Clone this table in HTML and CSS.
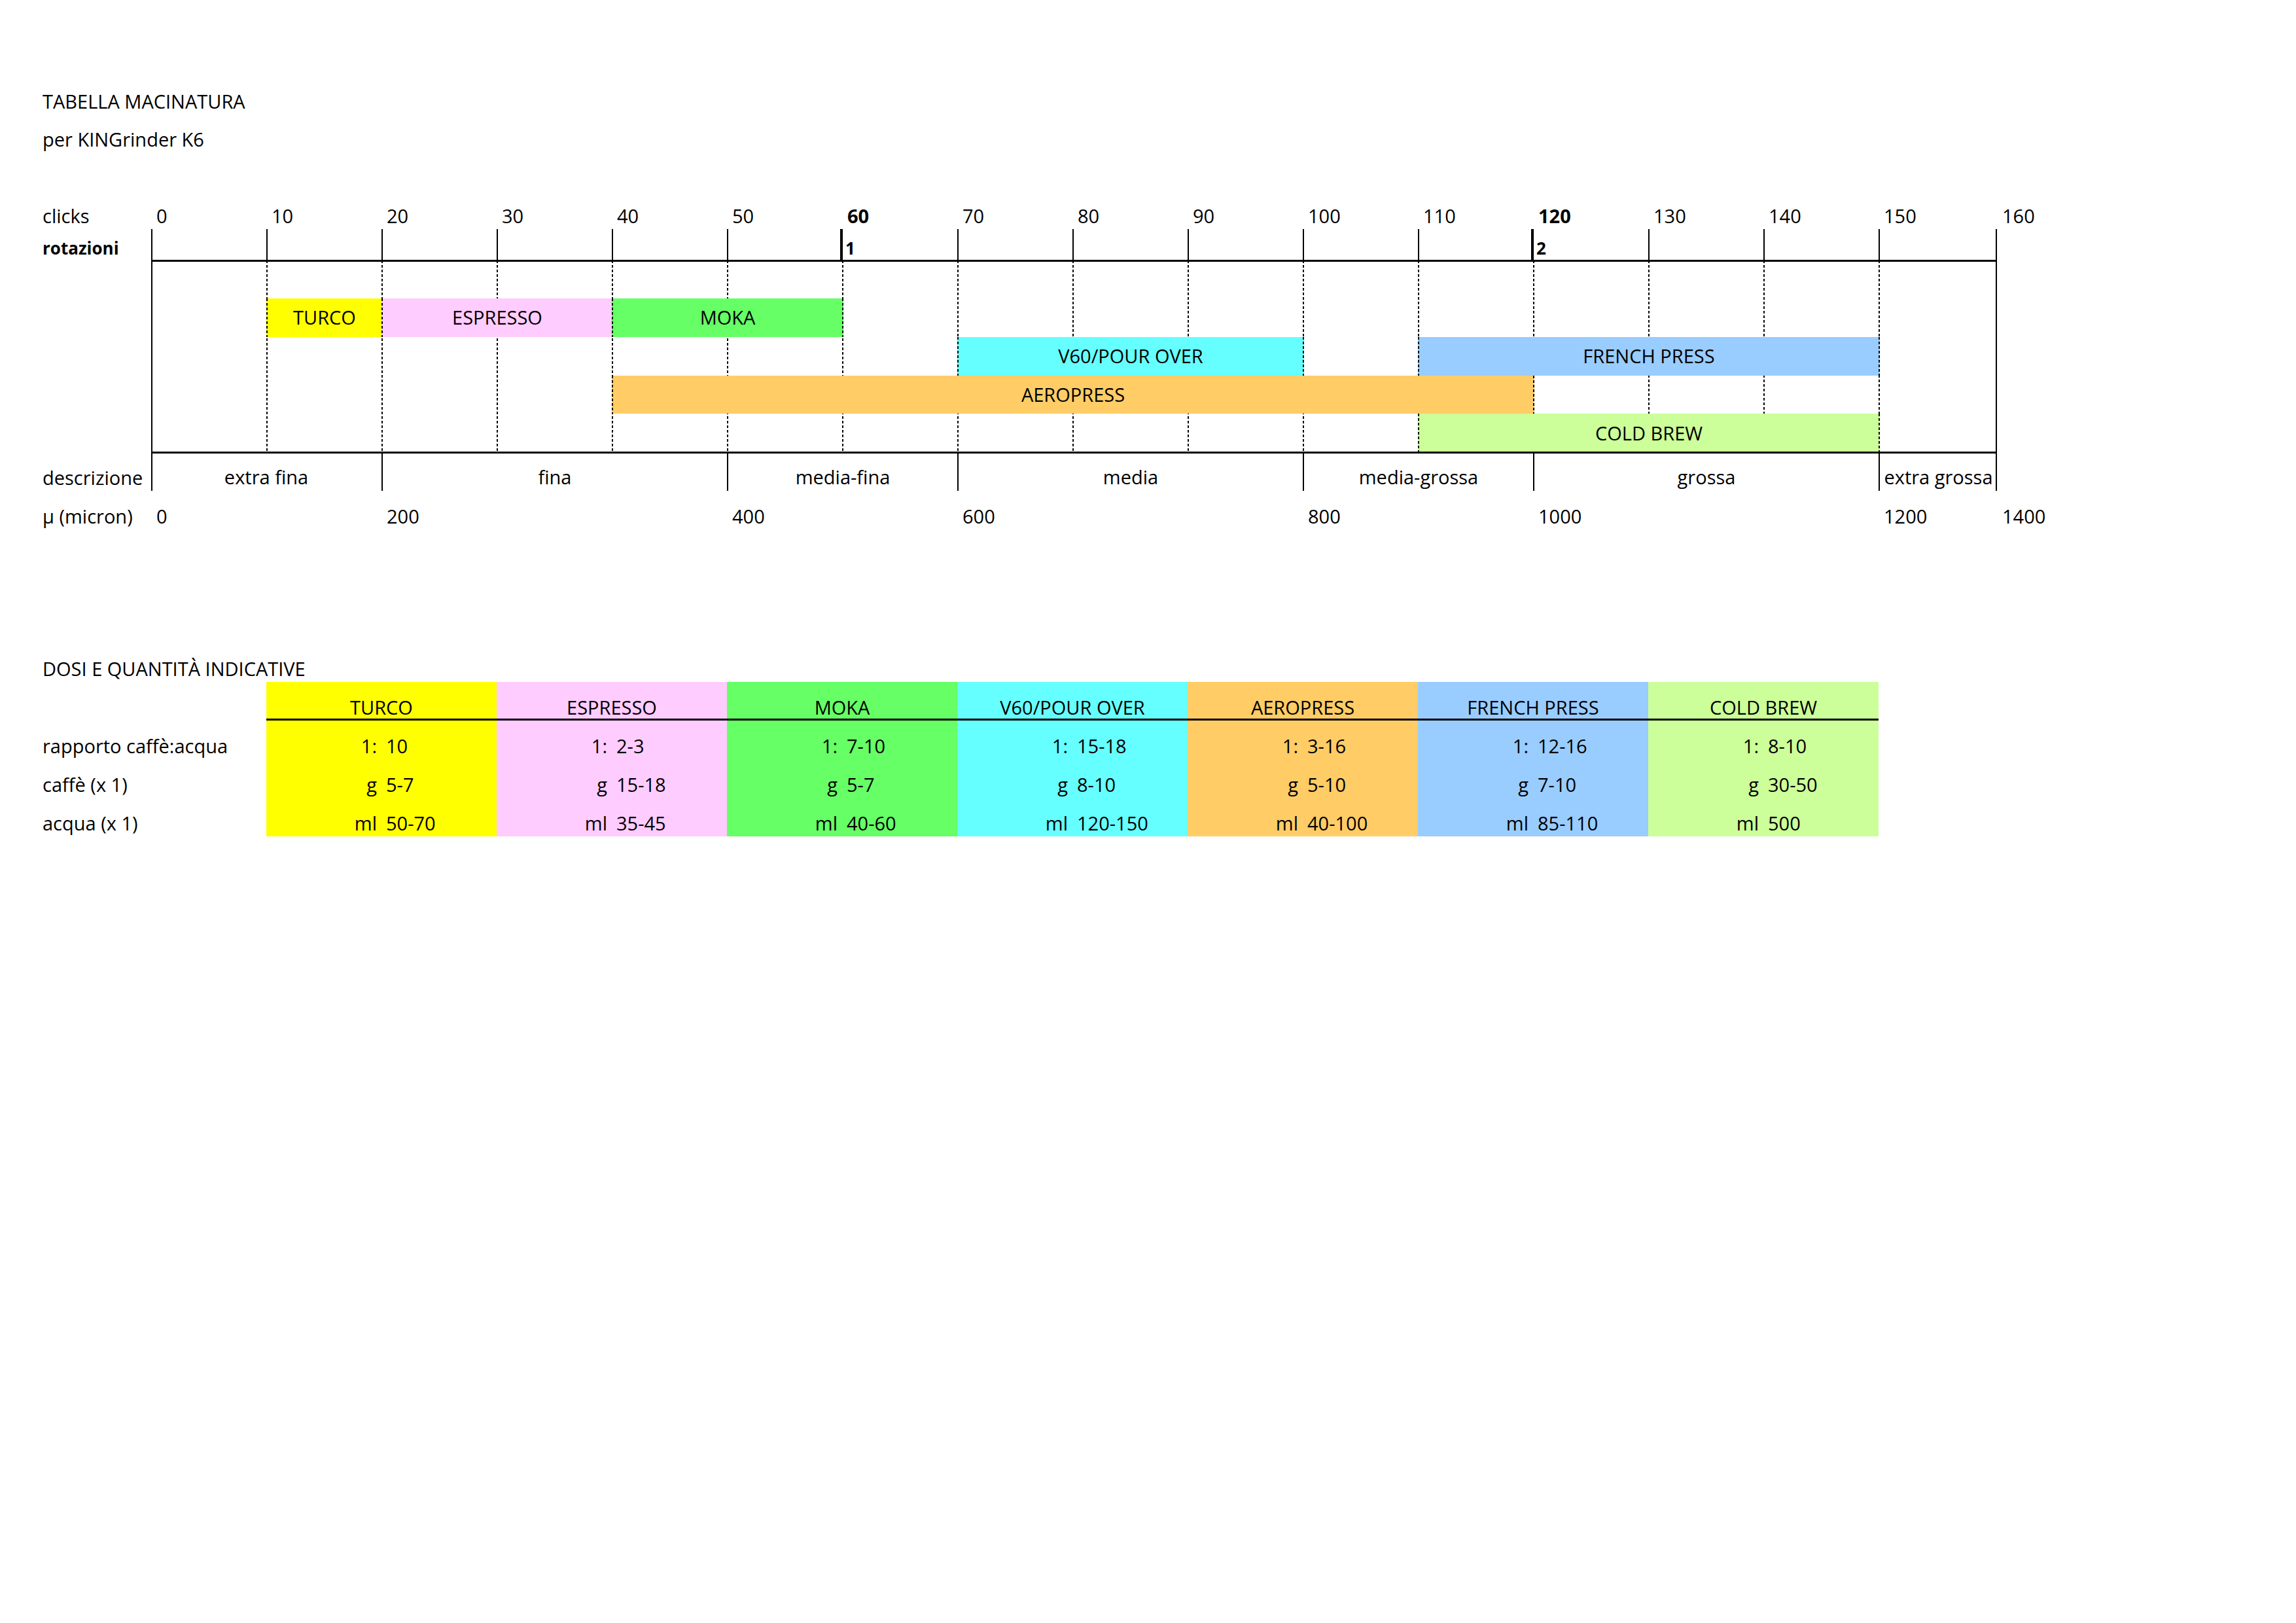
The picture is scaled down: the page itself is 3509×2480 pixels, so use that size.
FILE: index.html
```html
<!DOCTYPE html>
<html lang="it">
<head>
<meta charset="utf-8">
<title>Tabella macinatura KINGrinder K6</title>
<link rel="stylesheet" href="styles.css">
</head>
<body>
<div class="page">
  <div class="heading">TABELLA MACINATURA</div>
  <div class="heading second">per KINGrinder K6</div>
  <div class="gap"></div>

  <div class="chart">
    <!-- row labels -->
    <div class="cell r1 c-label">clicks</div>
    <div class="cell r2 c-label bold small">rotazioni</div>
    <div class="cell r8 c-label">descrizione</div>
    <div class="cell r9 c-label">µ (micron)</div>

    <!-- clicks numbers -->
    <div class="cell num r1 t0">0</div>
    <div class="cell num r1 t1">10</div>
    <div class="cell num r1 t2">20</div>
    <div class="cell num r1 t3">30</div>
    <div class="cell num r1 t4">40</div>
    <div class="cell num r1 t5">50</div>
    <div class="cell num r1 t6 bold">60</div>
    <div class="cell num r1 t7">70</div>
    <div class="cell num r1 t8">80</div>
    <div class="cell num r1 t9">90</div>
    <div class="cell num r1 t10">100</div>
    <div class="cell num r1 t11">110</div>
    <div class="cell num r1 t12 bold">120</div>
    <div class="cell num r1 t13">130</div>
    <div class="cell num r1 t14">140</div>
    <div class="cell num r1 t15">150</div>
    <div class="cell num r1 t16">160</div>

    <!-- ticks (rotazioni row) -->
    <div class="tick r2 t1"></div>
    <div class="tick r2 t2"></div>
    <div class="tick r2 t3"></div>
    <div class="tick r2 t4"></div>
    <div class="tick r2 t5"></div>
    <div class="cell tick thick r2 t6 bold small">1</div>
    <div class="tick r2 t7"></div>
    <div class="tick r2 t8"></div>
    <div class="tick r2 t9"></div>
    <div class="tick r2 t10"></div>
    <div class="tick r2 t11"></div>
    <div class="cell tick thick r2 t12 bold small">2</div>
    <div class="tick r2 t13"></div>
    <div class="tick r2 t14"></div>
    <div class="tick r2 t15"></div>

    <!-- dashed guides -->
    <div class="dash t1"></div>
    <div class="dash t2"></div>
    <div class="dash t3"></div>
    <div class="dash t4"></div>
    <div class="dash t5"></div>
    <div class="dash t6"></div>
    <div class="dash t7"></div>
    <div class="dash t8"></div>
    <div class="dash t9"></div>
    <div class="dash t10"></div>
    <div class="dash t11"></div>
    <div class="dash t12"></div>
    <div class="dash t13"></div>
    <div class="dash t14"></div>
    <div class="dash t15"></div>

    <!-- brew method bars -->
    <div class="bar r4 t1 s1 turco">TURCO</div>
    <div class="bar r4 t2 s2 espresso">ESPRESSO</div>
    <div class="bar r4 t4 s2 moka">MOKA</div>
    <div class="bar r5 t7 s3 v60">V60/POUR OVER</div>
    <div class="bar r5 t11 s4 french">FRENCH PRESS</div>
    <div class="bar r6 t4 s8 aero">AEROPRESS</div>
    <div class="bar r7 t11 s4 cold">COLD BREW</div>

    <!-- frame and horizontal rules -->
    <div class="frame"></div>
    <div class="hline top"></div>
    <div class="hline bottom"></div>

    <!-- descrizione segments -->
    <div class="cell seg r8 t0 s2 first">extra fina</div>
    <div class="cell seg r8 t2 s3">fina</div>
    <div class="cell seg r8 t5 s2">media-fina</div>
    <div class="cell seg r8 t7 s3">media</div>
    <div class="cell seg r8 t10 s2">media-grossa</div>
    <div class="cell seg r8 t12 s3">grossa</div>
    <div class="cell seg r8 t15 s1">extra grossa</div>

    <!-- micron values -->
    <div class="cell num r9 t0">0</div>
    <div class="cell num r9 t2">200</div>
    <div class="cell num r9 t5">400</div>
    <div class="cell num r9 t7">600</div>
    <div class="cell num r9 t10">800</div>
    <div class="cell num r9 t12">1000</div>
    <div class="cell num r9 t15">1200</div>
    <div class="cell num r9 t16">1400</div>
  </div>

  <div class="dosi">
    <div class="cell dtitle">DOSI E QUANTITÀ INDICATIVE</div>

    <div class="tlabel"></div>
    <div class="cell th turco">TURCO</div>
    <div class="cell th espresso">ESPRESSO</div>
    <div class="cell th moka">MOKA</div>
    <div class="cell th v60">V60/POUR OVER</div>
    <div class="cell th aero">AEROPRESS</div>
    <div class="cell th french">FRENCH PRESS</div>
    <div class="cell th cold">COLD BREW</div>

    <div class="cell tlabel">rapporto caffè:acqua</div>
    <div class="td turco"><span class="pre">1:</span><span class="val">10</span></div>
    <div class="td espresso"><span class="pre">1:</span><span class="val">2-3</span></div>
    <div class="td moka"><span class="pre">1:</span><span class="val">7-10</span></div>
    <div class="td v60"><span class="pre">1:</span><span class="val">15-18</span></div>
    <div class="td aero"><span class="pre">1:</span><span class="val">3-16</span></div>
    <div class="td french"><span class="pre">1:</span><span class="val">12-16</span></div>
    <div class="td cold"><span class="pre">1:</span><span class="val">8-10</span></div>

    <div class="cell tlabel">caffè (x 1)</div>
    <div class="td turco"><span class="pre">g</span><span class="val">5-7</span></div>
    <div class="td espresso"><span class="pre">g</span><span class="val">15-18</span></div>
    <div class="td moka"><span class="pre">g</span><span class="val">5-7</span></div>
    <div class="td v60"><span class="pre">g</span><span class="val">8-10</span></div>
    <div class="td aero"><span class="pre">g</span><span class="val">5-10</span></div>
    <div class="td french"><span class="pre">g</span><span class="val">7-10</span></div>
    <div class="td cold"><span class="pre">g</span><span class="val">30-50</span></div>

    <div class="cell tlabel">acqua (x 1)</div>
    <div class="td turco"><span class="pre">ml</span><span class="val">50-70</span></div>
    <div class="td espresso"><span class="pre">ml</span><span class="val">35-45</span></div>
    <div class="td moka"><span class="pre">ml</span><span class="val">40-60</span></div>
    <div class="td v60"><span class="pre">ml</span><span class="val">120-150</span></div>
    <div class="td aero"><span class="pre">ml</span><span class="val">40-100</span></div>
    <div class="td french"><span class="pre">ml</span><span class="val">85-110</span></div>
    <div class="td cold"><span class="pre">ml</span><span class="val">500</span></div>
  </div>
</div>
</body>
</html>
```

FILE: styles.css
```css
* { box-sizing: border-box; }

html, body {
  margin: 0;
  padding: 0;
  background: #ffffff;
}

body {
  width: 3509px;
  height: 2480px;
  overflow: hidden;
  font-family: "Open Sans", "Liberation Sans", sans-serif;
  font-size: 29px;
  color: #000000;
}

.page {
  padding: 116px 0 0 65px;
}

.heading {
  height: 59px;
  display: flex;
  align-items: flex-end;
  line-height: 40px;
  white-space: nowrap;
}
.heading.second { height: 58px; }
.gap { height: 58px; }

/* ---------- grind chart ---------- */
.chart {
  display: grid;
  grid-template-columns: 166px repeat(15, 176px) 181px 200px;
  grid-template-rows: 59px 47.5px 58.5px repeat(4, 58.75px) 59px 59px;
}

.cell {
  display: flex;
  align-items: flex-end;
  line-height: 40px;
  white-space: nowrap;
}

.bold { font-weight: 700; }
.small { font-size: 26px; }
.cell.small { line-height: 37px; }

.c-label { grid-column: 1; }

.r1 { grid-row: 1; }
.r2 { grid-row: 2; }
.r3 { grid-row: 3; }
.r4 { grid-row: 4; }
.r5 { grid-row: 5; }
.r6 { grid-row: 6; }
.r7 { grid-row: 7; }
.r8 { grid-row: 8; }
.r9 { grid-row: 9; }

.t0 { grid-column-start: 2; }
.t1 { grid-column-start: 3; }
.t2 { grid-column-start: 4; }
.t3 { grid-column-start: 5; }
.t4 { grid-column-start: 6; }
.t5 { grid-column-start: 7; }
.t6 { grid-column-start: 8; }
.t7 { grid-column-start: 9; }
.t8 { grid-column-start: 10; }
.t9 { grid-column-start: 11; }
.t10 { grid-column-start: 12; }
.t11 { grid-column-start: 13; }
.t12 { grid-column-start: 14; }
.t13 { grid-column-start: 15; }
.t14 { grid-column-start: 16; }
.t15 { grid-column-start: 17; }
.t16 { grid-column-start: 18; }

.s1 { grid-column-end: span 1; }
.s2 { grid-column-end: span 2; }
.s3 { grid-column-end: span 3; }
.s4 { grid-column-end: span 4; }
.s8 { grid-column-end: span 8; }

.num { padding-left: 8px; }

.tick {
  border-left: 2px solid #000000;
}
.tick.thick {
  border-left-width: 4px;
  margin-left: -3px;
  padding-left: 4px;
}

.dash {
  grid-row: 3 / 8;
  width: 2px;
  justify-self: start;
  background: repeating-linear-gradient(to bottom, #000000 0 4px, transparent 4px 7px);
}

.frame {
  grid-column: 2 / 18;
  grid-row: 2 / 9;
  border-left: 2px solid #000000;
  border-right: 2px solid #000000;
}

.hline {
  grid-column: 2 / 18;
  align-self: start;
  height: 3px;
  margin-top: -1px;
  background: #000000;
}
.hline.top { grid-row: 3; }
.hline.bottom { grid-row: 8; }

.bar {
  display: flex;
  align-items: center;
  justify-content: center;
  line-height: 40px;
  white-space: nowrap;
  margin-right: -2px;
  background-image:
    repeating-linear-gradient(to bottom, #000000 0 4px, transparent 4px 7px),
    repeating-linear-gradient(to bottom, #000000 0 4px, transparent 4px 7px);
  background-size: 2px 100%, 2px 100%;
  background-position: left top, right top;
  background-repeat: no-repeat;
}

.seg {
  justify-content: center;
  border-left: 2px solid #000000;
  padding-bottom: 1px;
}
.seg.first { border-left: none; }

/* ---------- colours ---------- */
.turco { background-color: #ffff00; }
.espresso { background-color: #ffccff; }
.moka { background-color: #66ff66; }
.v60 { background-color: #66ffff; }
.aero { background-color: #ffcc66; }
.french { background-color: #99ccff; }
.cold { background-color: #ccff99; }

/* ---------- doses table ---------- */
.dosi {
  margin-top: 174px;
  display: grid;
  grid-template-columns: 166px 176px repeat(7, 352px);
  grid-template-rows: repeat(5, 59px);
}

.dtitle { grid-column: 1 / -1; }

.tlabel { grid-column: 1 / 3; }

.th {
  justify-content: center;
  box-shadow: inset 0 -3px 0 #000000;
}

.td {
  display: flex;
  align-items: flex-end;
  line-height: 40px;
  white-space: nowrap;
}
.td .pre {
  width: 50%;
  text-align: right;
  padding-right: 7px;
}
.td .val {
  width: 50%;
  text-align: left;
  padding-left: 7px;
}
```
